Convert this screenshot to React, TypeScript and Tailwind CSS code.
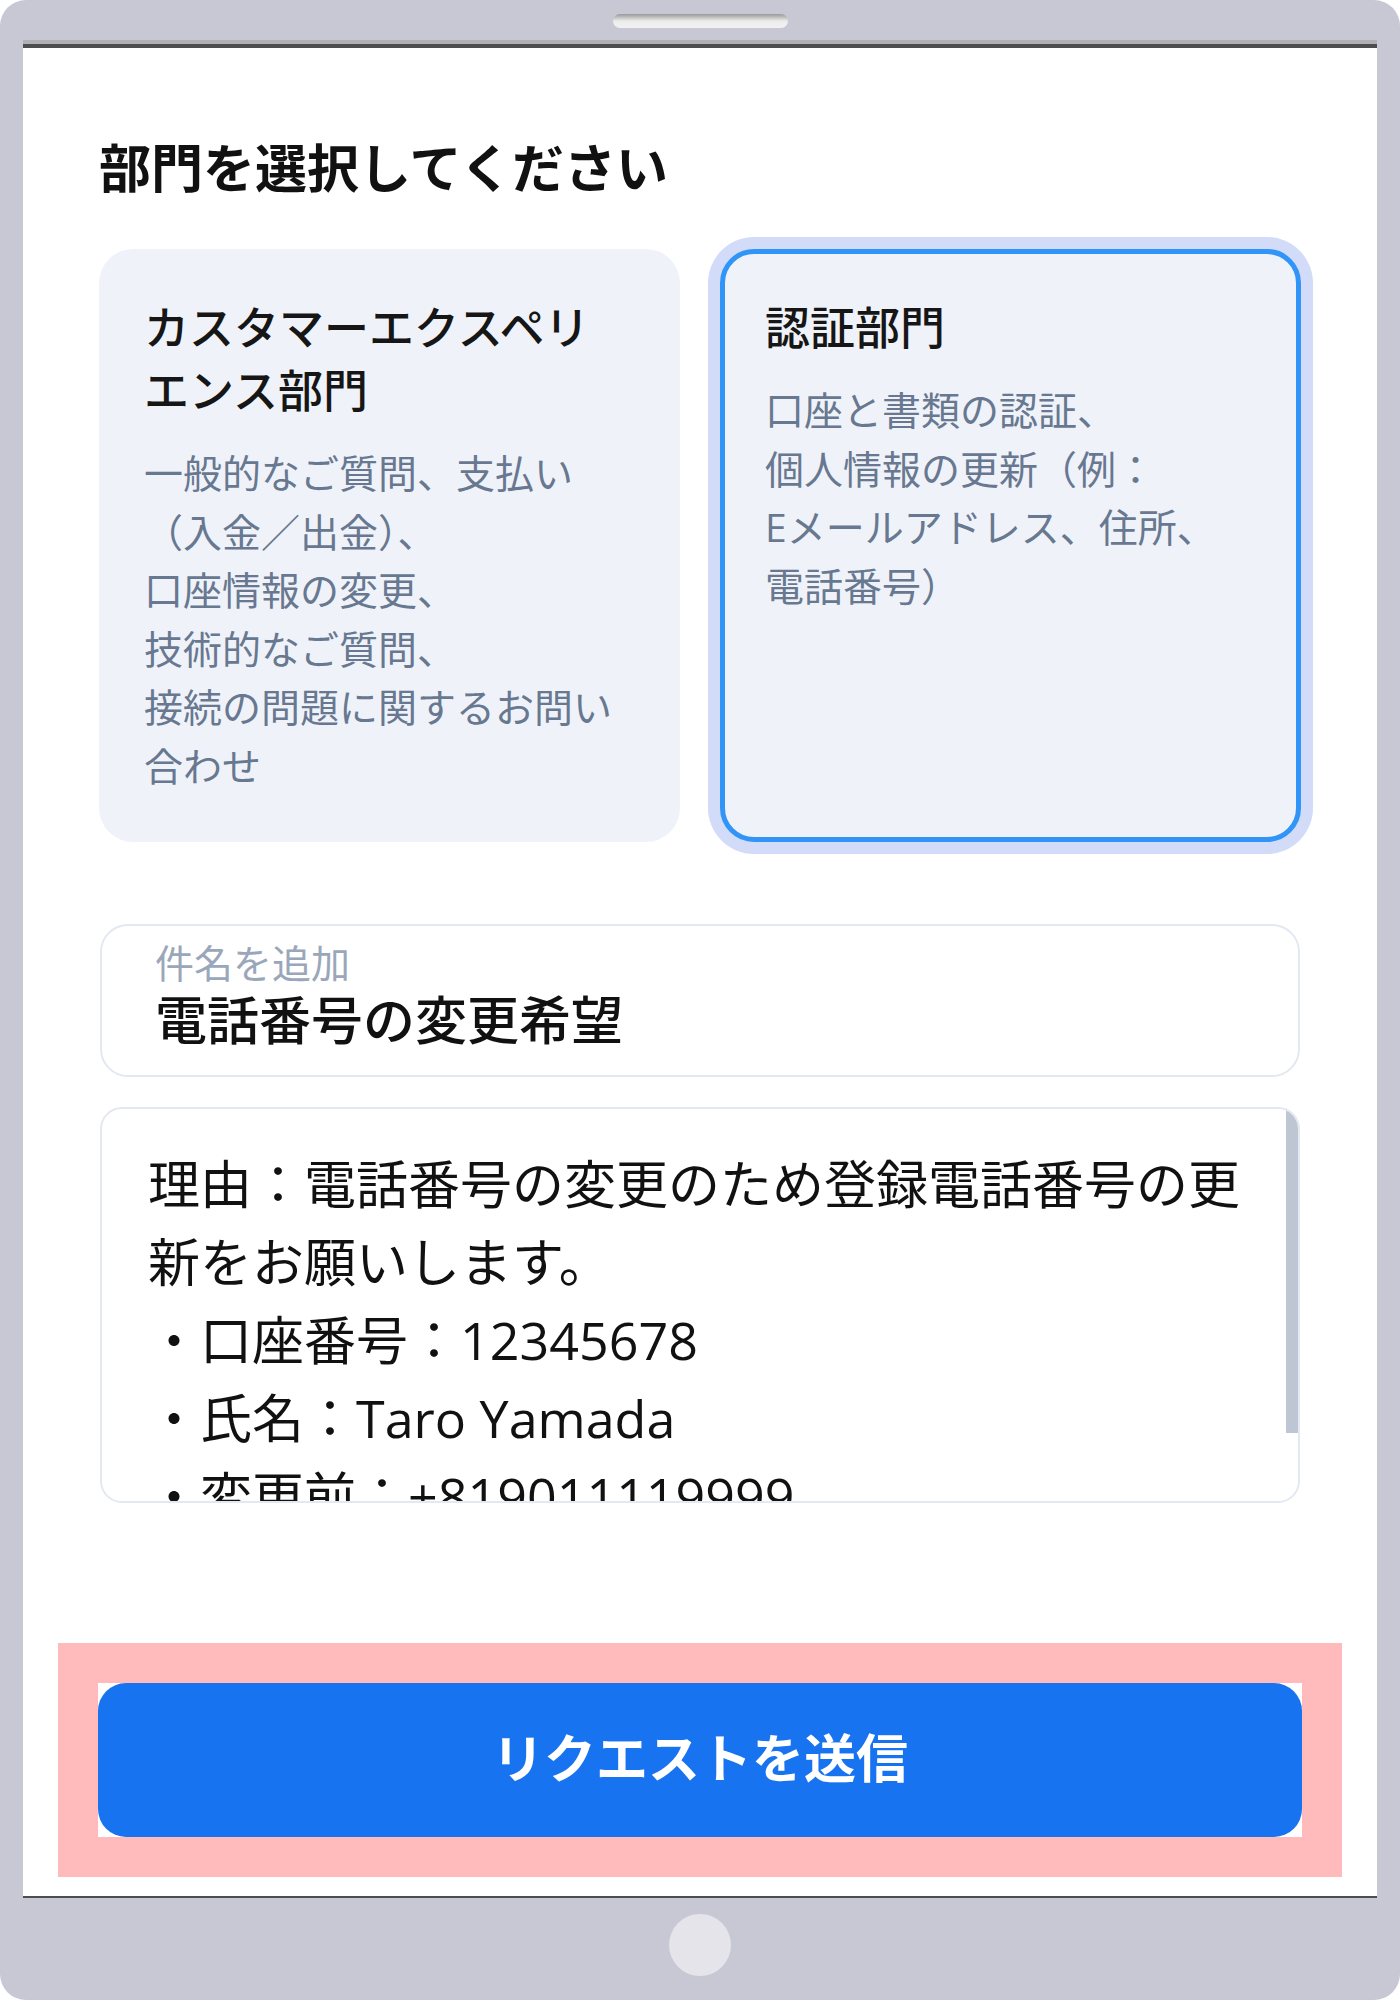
import { useState } from "react"

const departments = [
  {
    id: "cx",
    title: ["カスタマーエクスペリ", "エンス部門"],
    lines: [
      "一般的なご質問、支払い",
      "（入金／出金）、",
      "口座情報の変更、",
      "技術的なご質問、",
      "接続の問題に関するお問い",
      "合わせ",
    ],
  },
  {
    id: "verify",
    title: ["認証部門"],
    lines: ["口座と書類の認証、", "個人情報の更新（例：", "Eメールアドレス、住所、", "電話番号）"],
  },
]

const message = [
  "理由：電話番号の変更のため登録電話番号の更新をお願いします。",
  "・口座番号：12345678",
  "・氏名：Taro Yamada",
  "・変更前：+819011119999",
  "・変更後：+819022228888",
]

export default function App() {
  const [selected, setSelected] = useState("verify")

  return (
    <div className="w-[1400px] h-[2000px] bg-white font-['Open_Sans','Noto_Sans_CJK_JP',sans-serif]">
      <div className="flex h-full flex-col rounded-[26px] bg-[#c8c8d4]">
        {/* top bezel with speaker */}
        <div className="flex h-[40px] justify-center pt-[14px]">
          <div className="h-[14px] w-[175px] rounded-full bg-gradient-to-b from-[#9a9a9c] via-[#ececec] to-[#f2f2f2]" />
        </div>

        <div className="mx-[23px] flex flex-col bg-white">
          <div className="h-[4px] bg-[#b0b0b4]" />
          <div className="h-[4px] bg-[#4d4d4f]" />

          <div className="px-[76px] pt-[81px] pb-[19px]">
            <h1 className="text-[52px] leading-[78px] font-bold text-[#111]">部門を選択してください</h1>

            <div className="mt-[42px] grid grid-cols-2 gap-[40px]">
              {departments.map((d) => {
                const active = selected === d.id
                return (
                  <button
                    key={d.id}
                    onClick={() => setSelected(d.id)}
                    className={`flex flex-col rounded-[34px] border-[5px] bg-[#eff3f9] px-[40px] py-[42px] text-left ${
                      active ? "border-[#3194f7] shadow-[0_0_0_12px_#d2dbf8]" : "border-transparent"
                    }`}
                  >
                    <div className="mb-[22px] text-[45px] leading-[63px] font-medium text-[#161616]">
                      {d.title.map((t) => (
                        <div key={t} className="whitespace-nowrap">
                          {t}
                        </div>
                      ))}
                    </div>
                    <div className="text-[39px] leading-[58.5px] text-[#687890]">
                      {d.lines.map((l) => (
                        <div key={l} className="whitespace-nowrap">
                          {l}
                        </div>
                      ))}
                    </div>
                  </button>
                )
              })}
            </div>

            {/* subject */}
            <div className="mt-[82px] mx-[1px] rounded-[28px] border-2 border-[#e3e8f1] pt-[14px] pb-[24px] pl-[53px]">
              <div className="text-[39px] leading-[46px] text-[#9aa7ba]">件名を追加</div>
              <div className="mt-[3px] text-[52px] leading-[62px] font-medium text-[#111]">電話番号の変更希望</div>
            </div>

            {/* message body */}
            <div className="relative mt-[30px] mx-[1px] h-[396px] overflow-hidden rounded-[22px] border-2 border-[#e3e8f1] pt-[36px] pl-[46px] pr-[46px]">
              <div className="text-[52px] leading-[78px] text-[#111]">
                {message.map((m) => (
                  <div key={m}>{m}</div>
                ))}
              </div>
              <div className="absolute top-0 right-0 h-[324px] w-[12px] bg-[#bec5d3]" />
            </div>

            {/* submit */}
            <div className="mt-[140px] -mx-[41px] bg-[#ffbbbb] p-[40px]">
              <div className="bg-white">
                <button className="flex h-[154px] w-full items-center justify-center rounded-[28px] bg-[#1773ef] pb-[4px] text-[52px] font-bold text-white">
                  リクエストを送信
                </button>
              </div>
            </div>
          </div>

          <div className="h-[2px] bg-[#4d4d4f]" />
        </div>

        {/* bottom bezel with home button */}
        <div className="flex flex-1 justify-center pt-[16px]">
          <div className="h-[62px] w-[62px] rounded-full bg-[#e4e4ea]" />
        </div>
      </div>
    </div>
  )
}
